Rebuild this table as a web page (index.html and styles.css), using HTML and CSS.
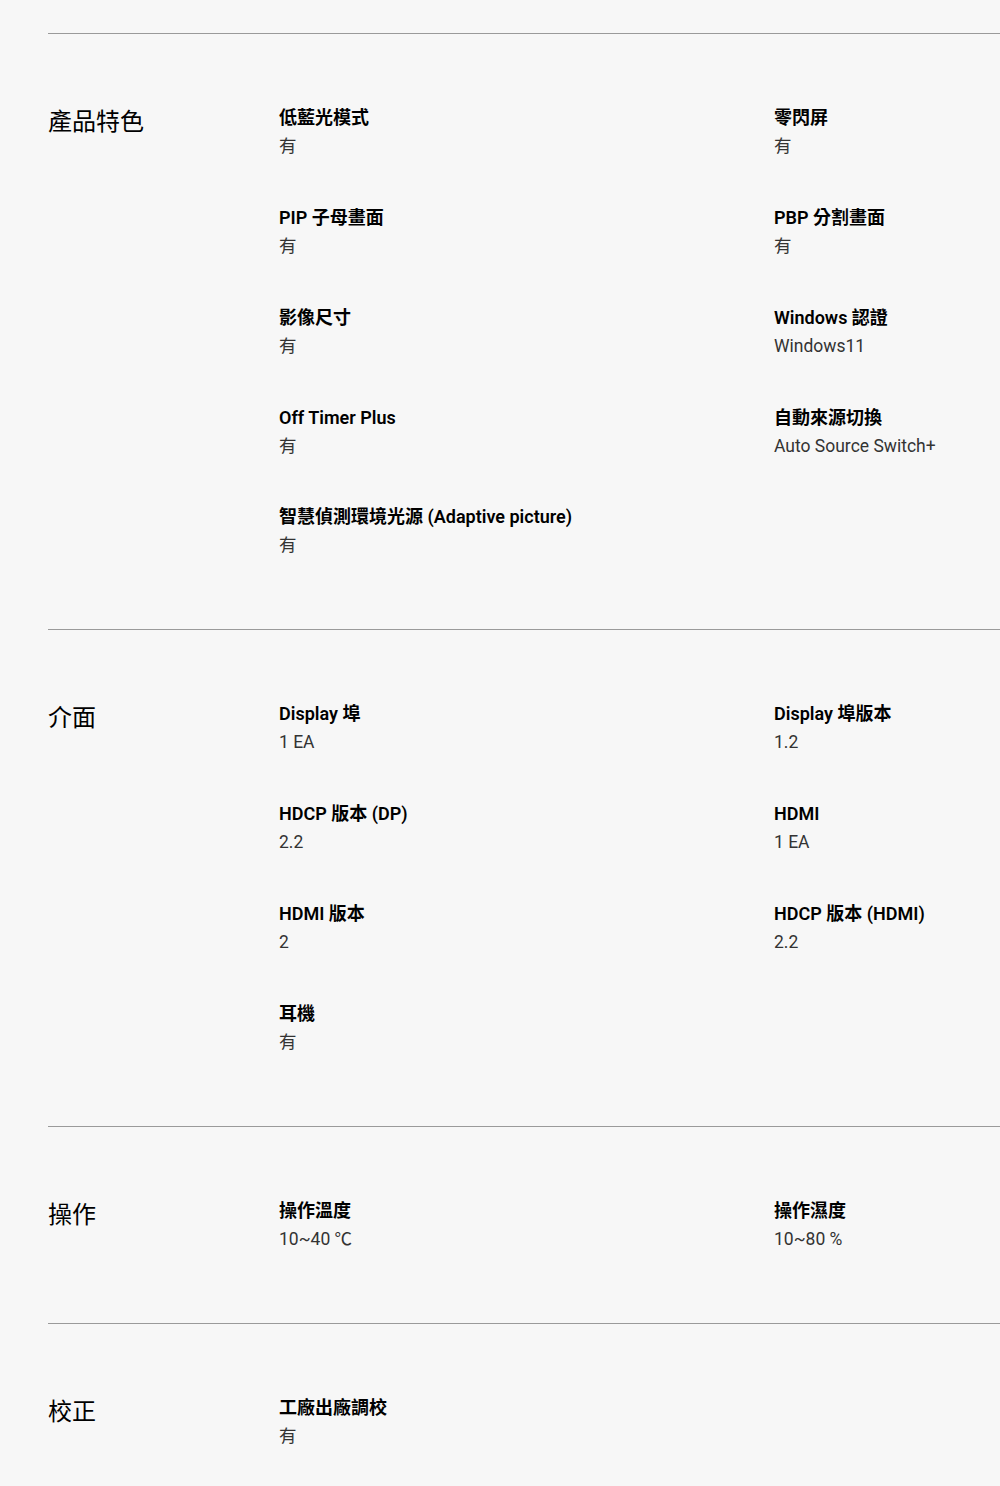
FILE: index.html
```html
<!DOCTYPE html>
<html lang="zh-TW">
<head>
  <meta charset="UTF-8">
  <meta name="viewport" content="width=device-width, initial-scale=1.0">
  <title>規格</title>
  <link rel="stylesheet" href="styles.css">
</head>
<body>
  <div class="specs">
    <section class="spec-group">
      <h2>產品特色</h2>
      <div class="spec-list">
        <div class="spec-item"><h3>低藍光模式</h3><p>有</p></div>
        <div class="spec-item"><h3>零閃屏</h3><p>有</p></div>
        <div class="spec-item"><h3>PIP 子母畫面</h3><p>有</p></div>
        <div class="spec-item"><h3>PBP 分割畫面</h3><p>有</p></div>
        <div class="spec-item"><h3>影像尺寸</h3><p>有</p></div>
        <div class="spec-item"><h3>Windows 認證</h3><p>Windows11</p></div>
        <div class="spec-item"><h3>Off Timer Plus</h3><p>有</p></div>
        <div class="spec-item"><h3>自動來源切換</h3><p>Auto Source Switch+</p></div>
        <div class="spec-item"><h3>智慧偵測環境光源 (Adaptive picture)</h3><p>有</p></div>
      </div>
    </section>

    <section class="spec-group">
      <h2>介面</h2>
      <div class="spec-list">
        <div class="spec-item"><h3>Display 埠</h3><p>1 EA</p></div>
        <div class="spec-item"><h3>Display 埠版本</h3><p>1.2</p></div>
        <div class="spec-item"><h3>HDCP 版本 (DP)</h3><p>2.2</p></div>
        <div class="spec-item"><h3>HDMI</h3><p>1 EA</p></div>
        <div class="spec-item"><h3>HDMI 版本</h3><p>2</p></div>
        <div class="spec-item"><h3>HDCP 版本 (HDMI)</h3><p>2.2</p></div>
        <div class="spec-item"><h3>耳機</h3><p>有</p></div>
      </div>
    </section>

    <section class="spec-group">
      <h2>操作</h2>
      <div class="spec-list">
        <div class="spec-item"><h3>操作溫度</h3><p>10~40 ℃</p></div>
        <div class="spec-item"><h3>操作濕度</h3><p>10~80 %</p></div>
      </div>
    </section>

    <section class="spec-group">
      <h2>校正</h2>
      <div class="spec-list">
        <div class="spec-item"><h3>工廠出廠調校</h3><p>有</p></div>
      </div>
    </section>
  </div>
</body>
</html>
```

FILE: styles.css
```css
body {
  margin: 0;
  padding: 0;
  background-color: #f7f7f7;
  color: #000;
  font-family: Roboto, "Noto Sans CJK TC", sans-serif;
}
.specs {
  margin-left: 48px;
  padding-top: 33px;
}
.spec-group {
  display: grid;
  grid-template-columns: 231px 1fr;
  border-top: 1px solid #9a9a9a;
  padding: 70px 0 70px;
}
.spec-group h2 {
  margin: 0;
  font-size: 24px;
  font-weight: 400;
  line-height: 36px;
}
.spec-list {
  display: grid;
  grid-template-columns: 495px 1fr;
  row-gap: 43.85px;
}
.spec-item h3 {
  margin: 0;
  font-size: 18px;
  font-weight: 600;
  line-height: 28px;
}
.spec-item p {
  margin: 0;
  font-size: 17.5px;
  line-height: 28px;
  color: #333;
}
```
